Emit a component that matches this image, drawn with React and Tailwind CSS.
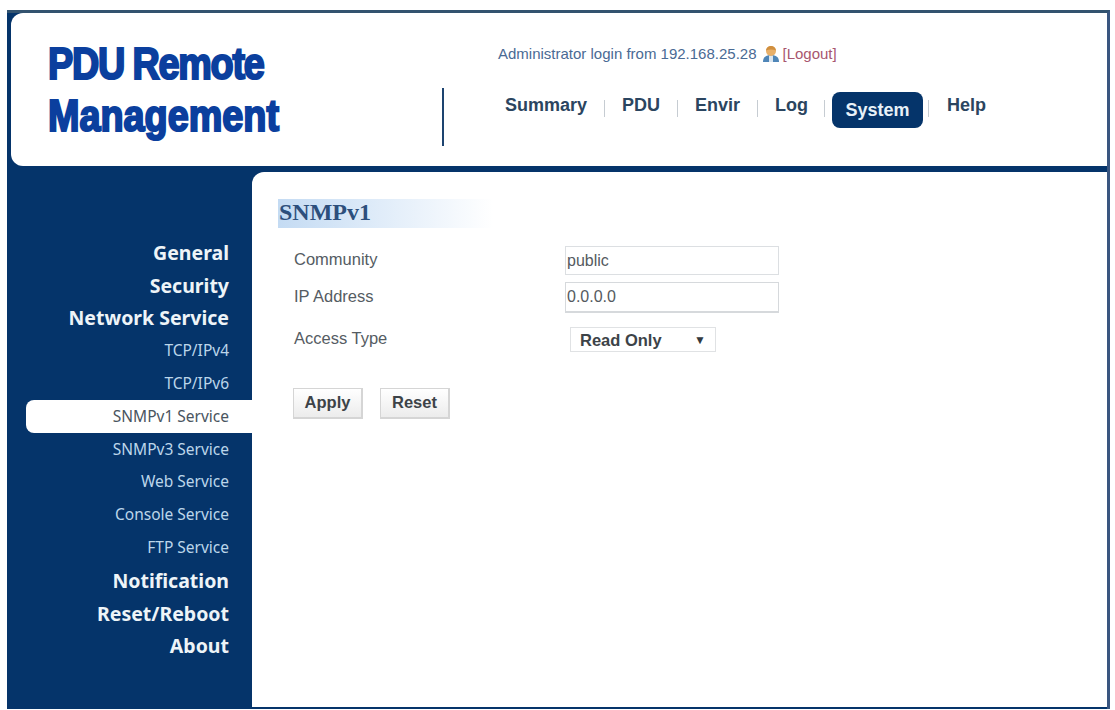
const NAV = ['Summary', 'PDU', 'Envir', 'Log', 'System', 'Help']

const SIDE = [
  { label: 'General', top: true },
  { label: 'Security', top: true },
  { label: 'Network Service', top: true },
  { label: 'TCP/IPv4' },
  { label: 'TCP/IPv6' },
  { label: 'SNMPv1 Service', active: true },
  { label: 'SNMPv3 Service' },
  { label: 'Web Service' },
  { label: 'Console Service' },
  { label: 'FTP Service' },
  { label: 'Notification', top: true },
  { label: 'Reset/Reboot', top: true },
  { label: 'About', top: true },
]

function UserIcon() {
  return (
    <svg width="18" height="18" viewBox="0 0 18 18" className="ml-[6px] mr-[2px]">
      <path d="M1 17c0-5 3-7 8-7s8 2 8 7z" fill="#4f86b8" />
      <path d="M7 10.5h4v6.5H7z" fill="#dbe6f0" />
      <circle cx="9" cy="6" r="5" fill="#e8b06a" />
      <path d="M4 5.6C4.6 2 7 1 9 1s4.400 1 5 4.600C11 4 7 4 4 5.600z" fill="#d08f3e" />
    </svg>
  )
}

function Header() {
  return (
    <header className="h-[153px] ml-[4px] bg-white rounded-l-[12px] flex">
      <div className="w-[433px] shrink-0 pl-[37px] pt-[25px] flex justify-between">
        <h1 className="origin-top-left scale-x-[0.84] whitespace-nowrap font-['Liberation_Sans',sans-serif] font-bold text-[45px] leading-[52px] text-[#0b3f9e] [-webkit-text-stroke:2.2px_#0b3f9e]">
          <span className="tracking-[-1.5px] [word-spacing:-1px]">PDU Remote</span>
          <br />
          Management
        </h1>
        <div className="w-[2px] h-[58px] mt-[50px] bg-[#1d4470]" />
      </div>
      <div className="pl-[54px] pt-[30px] font-['Liberation_Sans',sans-serif]">
        <div className="flex items-center h-[22px] text-[15px] text-[#4a6a94]">
          Administrator login from 192.168.25.28
          <UserIcon />
          <span className="text-[#a8566f]">[Logout]</span>
        </div>
        <nav className="flex items-center mt-[26px] ml-[7px] text-[18px] font-bold text-[#2b4560]">
          {NAV.map((item, i) => (
            <div key={item} className="flex items-center">
              {item === 'System' ? (
                <span className="bg-[#05346a] text-[#e8f1f8] rounded-[8px] w-[91px] h-[36px] flex items-center justify-center mt-[1px]">
                  {item}
                </span>
              ) : (
                <span className="pb-[8px]">{item}</span>
              )}
              {i < NAV.length - 1 && (
                <span
                  className={`w-px h-[17px] mb-[2px] bg-[#c6ccd2] ${
                    item === 'System'
                      ? 'ml-[5px] mr-[18px]'
                      : item === 'Log'
                        ? 'ml-[16px] mr-[7px]'
                        : 'mx-[17px]'
                  }`}
                />
              )}
            </div>
          ))}
        </nav>
      </div>
    </header>
  )
}

function Sidebar() {
  return (
    <aside className="w-[245px] shrink-0 pt-[64px] pl-[19px] font-['Noto_Sans',sans-serif]">
      {SIDE.map(item => (
        <div
          key={item.label}
          className={`h-[32.8px] flex items-center justify-end pr-[23px] ${
            item.active
              ? 'bg-white rounded-l-[8px] text-[15.5px] text-[#4a5560]'
              : item.top
                ? 'text-[19.5px] font-bold text-[#eef4f8]'
                : 'text-[15.5px] text-[#bcd6ea]'
          }`}
        >
          {item.label}
        </div>
      ))}
    </aside>
  )
}

function FormRow({ label, className, children }) {
  return (
    <div className={`flex items-center ${className}`}>
      <label className="w-[271px] pb-[2px] text-[16.5px] text-[#555c63]">{label}</label>
      {children}
    </div>
  )
}

function Main() {
  return (
    <main className="flex-1 bg-white rounded-tl-[12px] pt-[27px] pl-[26px] font-['Liberation_Sans',sans-serif]">
      <h2 className="w-[215px] h-[29px] pl-px pb-[4px] flex items-center bg-gradient-to-r from-[#c4dbf3] to-white font-['Liberation_Serif',serif] font-bold text-[24px] text-[#2d4f7c]">
        SNMPv1
      </h2>
      <div className="pl-[16px] mt-[18px]">
        <FormRow label="Community">
          <input
            defaultValue="public"
            className="w-[214px] h-[29px] border border-[#dcdfe2] px-px text-[16px] text-[#555a60] outline-none"
          />
        </FormRow>
        <FormRow label="IP Address" className="mt-[7px]">
          <input
            defaultValue="0.0.0.0"
            className="w-[214px] h-[31px] border border-[#d6d9dc] border-b-2 px-px text-[16px] text-[#555a60] outline-none"
          />
        </FormRow>
        <FormRow label="Access Type" className="mt-[13px]">
          <div className="relative ml-[5px] w-[146px] h-[25px]">
            <select className="w-full h-full appearance-none border border-[#e0e2e4] pl-[9px] text-[16.5px] font-bold text-[#3d4348] bg-white outline-none">
              <option>Read Only</option>
            </select>
            <span className="absolute right-[10px] top-[4px] text-[12px] text-[#33393f]">▼</span>
          </div>
        </FormRow>
        <div className="flex gap-[17px] mt-[35px] -ml-px">
          <button className="w-[70px] h-[31px] border border-[#d5d5d5] border-b-2 border-r-2 bg-gradient-to-b from-white to-[#ececec] text-[16.5px] font-bold text-[#3d4348]">
            Apply
          </button>
          <button className="w-[70px] h-[31px] border border-[#d5d5d5] border-b-2 border-r-2 bg-gradient-to-b from-white to-[#ececec] text-[16.5px] font-bold text-[#3d4348]">
            Reset
          </button>
        </div>
      </div>
    </main>
  )
}

export default function App() {
  return (
    <div className="w-[1115px] h-[710px] bg-white pt-[10px] pl-[7px] pr-[5px] pb-px overflow-hidden">
      <div className="h-full flex flex-col bg-[#05346a] border-t-[3px] border-t-[#33536f] border-r-[3px] border-r-[#3a5680]">
        <Header />
        <div className="flex-1 flex mt-[6px] min-h-0">
          <Sidebar />
          <Main />
        </div>
        <div className="h-[2px] shrink-0" />
      </div>
    </div>
  )
}
